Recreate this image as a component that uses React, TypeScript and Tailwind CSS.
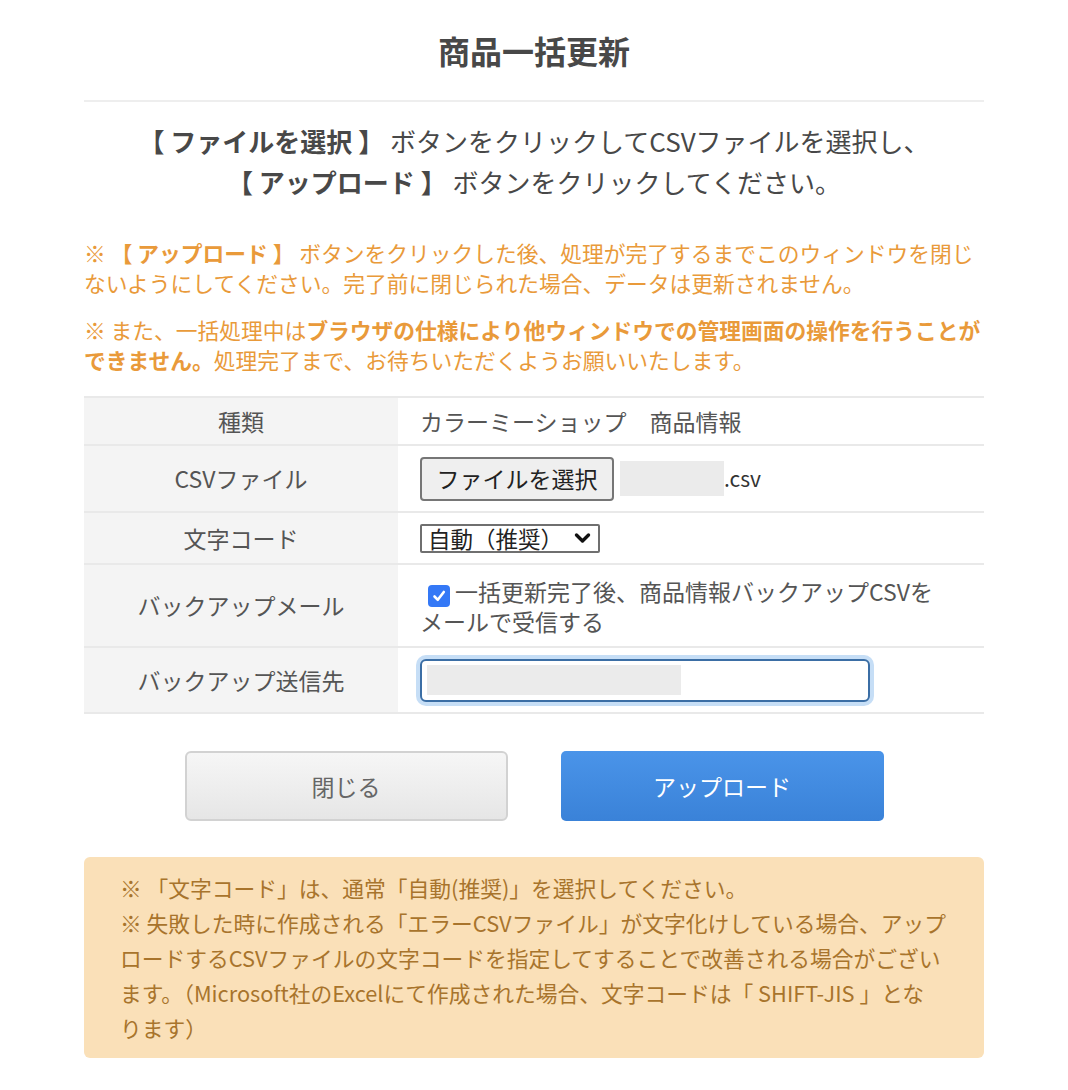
import React from "react";

const font = { fontFamily: '"Noto Sans CJK JP", "Noto Sans", sans-serif' };

function Row({
  label,
  h,
  children,
}: {
  label: string;
  h: string;
  children: React.ReactNode;
}) {
  return (
    <div className={`grid grid-cols-[314px_1fr] border-b-2 border-[#e9e9e9] ${h}`}>
      <div className="flex items-center justify-center bg-[#f4f4f4] text-[23px] text-[#555555]">
        {label}
      </div>
      <div className="flex items-center bg-white pl-[22px] text-[23px] text-[#555555]">
        {children}
      </div>
    </div>
  );
}

export default function App() {
  return (
    <div className="min-h-[1090px] bg-white" style={font}>
      <div className="mx-auto w-[900px]">
        <div className="border-b-2 border-[#eeeeee] pt-[26px] pb-[26px] text-center text-[32px] font-bold leading-[48px] text-[#484848]">
          商品一括更新
        </div>

        <div className="mt-[18px] text-center text-[26px] leading-[41px] text-[#484848]">
          <div>
            <span className="font-bold">【 ファイルを選択 】</span> ボタンをクリックしてCSVファイルを選択し、
          </div>
          <div>
            <span className="font-bold">【 アップロード 】</span> ボタンをクリックしてください。
          </div>
        </div>

        <div className="mt-[36px] text-[21.75px] leading-[30px] text-[#e99a3a]">
          <p className="whitespace-nowrap">
            ※ <span className="font-bold">【 アップロード 】</span> ボタンをクリックした後、処理が完了するまでこのウィンドウを閉じ
            <br />
            ないようにしてください。完了前に閉じられた場合、データは更新されません。
          </p>
          <p className="mt-[17px] whitespace-nowrap">
            ※ また、一括処理中は
            <span className="font-bold">ブラウザの仕様により他ウィンドウでの管理画面の操作を行うことが</span>
            <br />
            <span className="font-bold">できません。</span>処理完了まで、お待ちいただくようお願いいたします。
          </p>
        </div>

        <div className="mt-[21px] border-t-2 border-[#e9e9e9]">
          <Row label="種類" h="h-[48px]">
            <span>カラーミーショップ　商品情報</span>
          </Row>
          <Row label="CSVファイル" h="h-[67px]">
            <div className="flex items-center">
              <div className="flex h-[44px] w-[194px] items-center justify-center rounded-[4px] border-2 border-[#767676] bg-[#efefef] text-[23px] text-[#222222]">
                ファイルを選択
              </div>
              <div className="ml-[6px] h-[35px] w-[104px] bg-[#ebebeb]" />
              <span className="text-[21px] text-[#333333]">.csv</span>
            </div>
          </Row>
          <Row label="文字コード" h="h-[52px]">
            <div className="flex h-[29px] w-[180px] items-center justify-between rounded-[2px] border-2 border-[#6f6f6f] bg-white pl-[6px] pr-[7px] text-[22.5px] leading-none text-[#222222]">
              <span>自動（推奨）</span>
              <svg width="17" height="12" viewBox="0 0 17 12">
                <path d="M2.5 3 L8.5 9 L14.5 3" fill="none" stroke="#111" strokeWidth="3.4" strokeLinecap="round" strokeLinejoin="round" />
              </svg>
            </div>
          </Row>
          <Row label="バックアップメール" h="h-[83px]">
            <div className="leading-[30px]">
              <span className="ml-[8px] mr-[5px] inline-flex h-[22px] w-[22px] translate-y-[3px] items-center justify-center rounded-[4px] bg-[#3478f6] align-baseline">
                <svg width="16" height="16" viewBox="0 0 16 16">
                  <path d="M3.5 8.5 L6.8 11.8 L12.8 4" fill="none" stroke="white" strokeWidth="2.6" strokeLinecap="round" strokeLinejoin="round" />
                </svg>
              </span>
              一括更新完了後、商品情報バックアップCSVを
              <br />
              メールで受信する
            </div>
          </Row>
          <Row label="バックアップ送信先" h="h-[66px]">
            <div className="flex h-[43px] w-[450px] items-center rounded-[6px] border-2 border-[#3b6ea5] bg-white pl-[5px] shadow-[0_0_0_4px_#c6def6]">
              <div className="h-[30px] w-[254px] bg-[#ebebeb]" />
            </div>
          </Row>
        </div>

        <div className="mt-[37px] flex justify-center gap-[53px]">
          <button className="flex h-[70px] w-[323px] items-center justify-center rounded-[6px] border-2 border-[#d2d2d2] bg-gradient-to-b from-[#f6f6f6] to-[#e6e6e6] text-[23px] text-[#666666]">
            閉じる
          </button>
          <button className="flex h-[70px] w-[323px] items-center justify-center rounded-[5px] bg-gradient-to-b from-[#4a94e9] to-[#3a82d8] text-[23px] text-white">
            アップロード
          </button>
        </div>

        <div className="mt-[36px] rounded-[6px] bg-[#fae0b8] px-[36px] py-[13px] text-[21.75px] leading-[35px] text-[#a8742c]">
          <p className="whitespace-nowrap">
            ※ 「文字コード」は、通常「自動(推奨)」を選択してください。
            <br />
            ※ 失敗した時に作成される「エラーCSVファイル」が文字化けしている場合、アップ
            <br />
            ロードするCSVファイルの文字コードを指定してすることで改善される場合がござい
            <br />
            ます。（Microsoft社のExcelにて作成された場合、文字コードは「 SHIFT-JIS 」とな
            <br />
            ります）
          </p>
        </div>
      </div>
    </div>
  );
}
